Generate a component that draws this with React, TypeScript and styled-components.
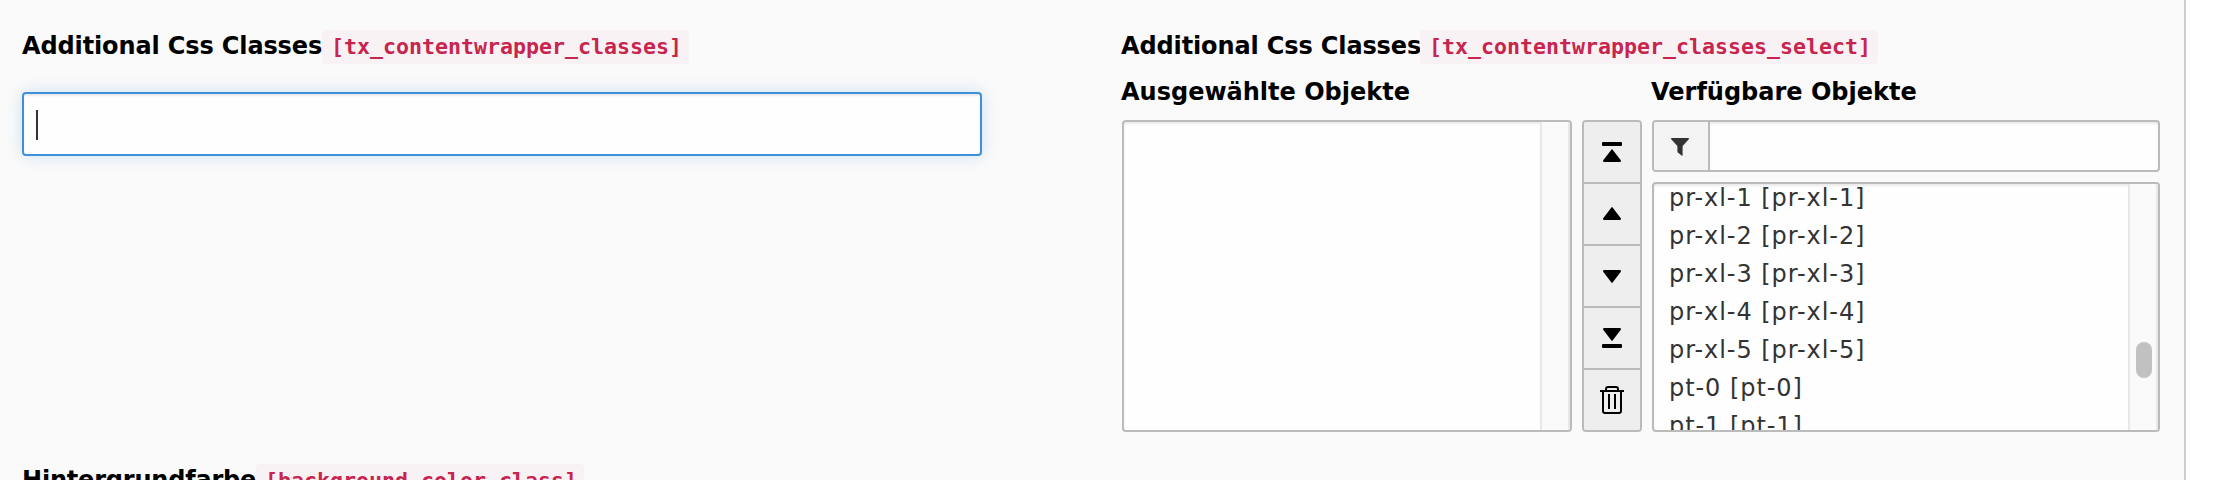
import React from 'react';
import styled, { createGlobalStyle } from 'styled-components';

const GlobalStyle = createGlobalStyle`
  * { box-sizing: border-box; }
  body { margin: 0; background: #fff; overflow: hidden; }
`;

const line = '#bbb';
const sans = "'DejaVu Sans', Verdana, sans-serif";

const Page = styled.main`
  width: 2186px;
  height: 480px;
  overflow: hidden;
  padding: 30px 24px 0 22px;
  background: #fafafa;
  border-right: 2px solid #ccc;
  color: #000;
  font-family: ${sans};
  font-size: 24px;
`;

const FieldRow = styled.section`
  display: grid;
  grid-template-columns: 960px 1038px;
  justify-content: space-between;
  align-items: start;
  height: 434px;
`;

const FieldLabel = styled.div<{ $width: number; $tracking: number; $shift?: number }>`
  display: grid;
  grid-template-columns: ${(p) => p.$width}px max-content;
  height: 34px;
  margin-left: ${(p) => p.$shift ?? 0}px;
  font-weight: 700;
  line-height: 32px;
  letter-spacing: ${(p) => p.$tracking}px;
  white-space: nowrap;
`;

const FieldName = styled.code`
  height: 34px;
  padding: 0 7px 0 9px;
  border-radius: 4px;
  background: #f9f2f4;
  color: #c7254e;
  font: 700 21.6px/34px 'DejaVu Sans Mono', Menlo, monospace;
  letter-spacing: 0;
`;

const FocusedInput = styled.div`
  display: flex;
  align-items: center;
  height: 64px;
  margin-top: 28px;
  padding: 0 12px;
  border: 2px solid #4090d9;
  border-radius: 4px;
  background: #fefefe;
  box-shadow: inset 0 2px 2px rgba(0, 0, 0, 0.075), 0 0 16px rgba(64, 144, 217, 0.24);
`;

const Caret = styled.span`
  width: 2px;
  height: 30px;
  margin-top: 2px;
  background: #333;
`;

const Selector = styled.div`
  display: grid;
  grid-template-columns: 450px 60px 508px;
  column-gap: 10px;
  margin-top: 12px;
`;

const Column = styled.div`
  display: flex;
  flex-direction: column;
  min-width: 0;
`;

const ColumnTitle = styled.div`
  height: 32px;
  margin: 0 0 12px -1px;
  font-weight: 700;
  line-height: 32px;
  white-space: nowrap;
`;

const ListBox = styled.div<{ $height: number }>`
  display: flex;
  height: ${(p) => p.$height}px;
  overflow: hidden;
  border: 2px solid ${line};
  border-radius: 4px;
  background: #fefefe;
  box-shadow: inset 0 2px 2px rgba(0, 0, 0, 0.075);
`;

const Options = styled.div`
  flex: 1;
  margin-top: -5px;
  padding-left: 15px;
  color: #333;
  line-height: 38px;
  letter-spacing: 0.94px;
  white-space: nowrap;
`;

const Option = styled.div`
  height: 38px;
`;

const Track = styled.div`
  width: 30px;
  padding: 158px 4px 0 6px;
  border: solid #e8e8e8;
  border-width: 0 2px;
  background: #fafafa;
`;

const Thumb = styled.div`
  width: 16px;
  height: 36px;
  border-radius: 8px;
  background: #c1c1c1;
`;

const ButtonGroup = styled.div`
  display: flex;
  flex-direction: column;
  height: 312px;
  margin-top: 44px;
  border: 2px solid ${line};
  border-radius: 4px;
  background: #eee;
  overflow: hidden;
`;

const MoveButton = styled.button`
  display: block;
  height: 62px;
  padding: 0;
  border: 0;
  border-bottom: 2px solid ${line};
  background: #eee;

  &:last-child {
    border-bottom: 0;
  }

  svg {
    display: block;
  }
`;

const FilterGroup = styled.div`
  display: flex;
  height: 52px;
  margin-bottom: 10px;
  border: 2px solid ${line};
  border-radius: 4px;
  background: #fefefe;
  overflow: hidden;
`;

const FilterAddon = styled.div`
  width: 56px;
  border-right: 2px solid ${line};
  background: #f4f4f4;
`;

const FilterInput = styled.div`
  flex: 1;
  box-shadow: inset 0 2px 2px rgba(0, 0, 0, 0.075);
`;

const moveIcons = [
  {
    name: 'top',
    shape: (
      <>
        <rect x="18" y="20" width="20" height="4" rx="1" />
        <path d="M28 27 37 38.5 36.5 40h-17L19 38.5z" />
      </>
    ),
  },
  { name: 'up', shape: <path d="M28 22.7 37 34.5 36.5 36h-17L19 34.5z" /> },
  { name: 'down', shape: <path d="M28 37.3 37 25.5 36.5 24h-17L19 25.5z" /> },
  {
    name: 'bottom',
    shape: (
      <>
        <path d="M28 33.3 37 21.5 36.5 20h-17L19 21.5z" />
        <rect x="18" y="36" width="20" height="4" rx="1" />
      </>
    ),
  },
  {
    name: 'remove',
    shape: (
      <path
        d="M16 21h24M22 21v-2q0-2 2-2h8q2 0 2 2v2M19 21v20q0 2 2 2h14q2 0 2-2V21M25 24v15M31 24v15"
        fill="none"
        stroke="#000"
        strokeWidth="2"
      />
    ),
  },
];

const options = [
  'pr-xl-1 [pr-xl-1]',
  'pr-xl-2 [pr-xl-2]',
  'pr-xl-3 [pr-xl-3]',
  'pr-xl-4 [pr-xl-4]',
  'pr-xl-5 [pr-xl-5]',
  'pt-0 [pt-0]',
  'pt-1 [pt-1]',
];

export default function App() {
  return (
    <>
      <GlobalStyle />
      <Page>
        <FieldRow>
          <Column>
            <FieldLabel $width={300} $tracking={-0.13}>
              Additional Css Classes
              <FieldName>[tx_contentwrapper_classes]</FieldName>
            </FieldLabel>
            <FocusedInput>
              <Caret />
            </FocusedInput>
          </Column>
          <Column>
            <FieldLabel $width={299} $tracking={-0.13} $shift={-1}>
              Additional Css Classes
              <FieldName>[tx_contentwrapper_classes_select]</FieldName>
            </FieldLabel>
            <Selector>
              <Column>
                <ColumnTitle>Ausgewählte Objekte</ColumnTitle>
                <ListBox $height={312}>
                  <Options />
                  <Track />
                </ListBox>
              </Column>
              <ButtonGroup>
                {moveIcons.map(({ name, shape }) => (
                  <MoveButton key={name} aria-label={name}>
                    <svg width="56" height="60" viewBox="0 0 56 60">
                      {shape}
                    </svg>
                  </MoveButton>
                ))}
              </ButtonGroup>
              <Column>
                <ColumnTitle>Verfügbare Objekte</ColumnTitle>
                <FilterGroup>
                  <FilterAddon>
                    <svg width="54" height="48" viewBox="0 0 54 48">
                      <path
                        d="M17.4 16h17.2q.8.8 0 1.6L28.6 24v9.4q-.4.6-1 .2L23.8 30.6q-.4-.4-.4-1V24l-6-6.4q-.8-.8 0-1.6z"
                        fill="#333"
                      />
                    </svg>
                  </FilterAddon>
                  <FilterInput />
                </FilterGroup>
                <ListBox $height={250}>
                  <Options>
                    {options.map((option) => (
                      <Option key={option}>{option}</Option>
                    ))}
                  </Options>
                  <Track>
                    <Thumb />
                  </Track>
                </ListBox>
              </Column>
            </Selector>
          </Column>
        </FieldRow>
        <FieldLabel $width={234} $tracking={-0.2}>
          Hintergrundfarbe
          <FieldName>[background_color_class]</FieldName>
        </FieldLabel>
      </Page>
    </>
  );
}
